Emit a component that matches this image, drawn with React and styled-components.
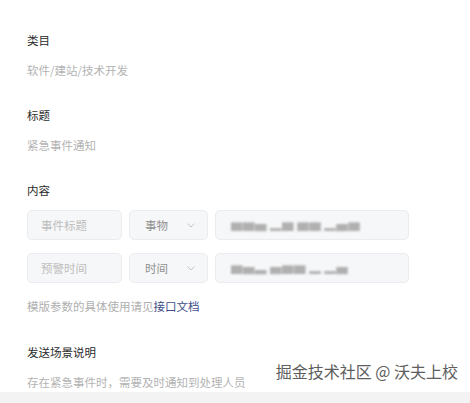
import React from 'react';
import styled, { createGlobalStyle } from 'styled-components';

const GlobalStyle = createGlobalStyle`
  html, body {
    margin: 0;
    padding: 0;
    background: #ffffff;
  }
  body {
    font-family: "Noto Sans CJK SC", "Noto Sans", sans-serif;
  }
`;

const Page = styled.div`
  position: relative;
  width: 470px;
  height: 403px;
  overflow: hidden;
  display: flex;
  flex-direction: column;
`;

const Form = styled.div`
  flex: 1;
  padding: 32px 27px 0;
`;

const Field = styled.div`
  margin-bottom: ${({ last }) => (last ? '0' : '29px')};
`;

const Label = styled.div`
  font-size: 11.5px;
  line-height: 16px;
  color: #2b2b2b;
  margin-bottom: ${({ tight }) => (tight ? '12px' : '14px')};
`;

const Value = styled.div`
  font-size: 11.5px;
  line-height: 16px;
  color: #b3b3b3;
`;

const Rows = styled.div`
  display: flex;
  flex-direction: column;
  gap: 13px;
`;

const Row = styled.div`
  display: grid;
  grid-template-columns: 95px 79px 194px;
  gap: 7px;
`;

const Box = styled.div`
  box-sizing: border-box;
  height: 30px;
  display: flex;
  align-items: center;
  justify-content: space-between;
  padding: 0 12px 0 ${({ pad }) => pad || 13}px;
  background: #f6f7f8;
  border: 1px solid #eaecef;
  border-radius: 5px;
  font-size: 11.5px;
  color: ${({ dim }) => (dim ? '#bdbdbd' : '#909090')};
`;

const Masked = styled.span`
  color: #b0b0b0;
  filter: blur(1.1px);
  letter-spacing: 0.5px;
`;

const Help = styled.div`
  margin-top: 15px;
  font-size: 11.5px;
  line-height: 16px;
  color: #b0b0b0;

  a {
    color: #414d88;
    text-decoration: none;
  }
`;

const Footer = styled.div`
  height: 11px;
  background: #f3f3f4;
`;

const Watermark = styled.div`
  position: absolute;
  right: 12px;
  bottom: 21px;
  font-size: 16px;
  line-height: 22px;
  color: #5e5e5e;
  text-shadow: 0 0 2px #ffffff;
`;

const Chevron = () => (
  <svg width="8" height="5" viewBox="0 0 8 5" fill="none">
    <path d="M0.6 0.6 L4 4 L7.4 0.6" stroke="#c4c4c4" strokeWidth="1" />
  </svg>
);

const App = () => {
  return (
    <Page>
      <GlobalStyle />
      <Form>
        <Field>
          <Label>类目</Label>
          <Value>软件/建站/技术开发</Value>
        </Field>
        <Field>
          <Label>标题</Label>
          <Value>紧急事件通知</Value>
        </Field>
        <Field>
          <Label tight>内容</Label>
          <Rows>
            <Row>
              <Box dim>事件标题</Box>
              <Box pad={15}>事物<Chevron /></Box>
              <Box pad={15}><Masked>▆▆▅ ▂▆ ▆▆ ▂▅▆</Masked></Box>
            </Row>
            <Row>
              <Box dim>预警时间</Box>
              <Box pad={15}>时间<Chevron /></Box>
              <Box pad={15}><Masked>▆▅▃ ▅▆▆ ▂  ▂▅</Masked></Box>
            </Row>
          </Rows>
          <Help>模版参数的具体使用请见<a href="#">接口文档</a></Help>
        </Field>
        <Field last style={{ marginTop: 30 }}>
          <Label>发送场景说明</Label>
          <Value>存在紧急事件时，需要及时通知到处理人员</Value>
        </Field>
      </Form>
      <Footer />
      <Watermark>掘金技术社区 @ 沃夫上校</Watermark>
    </Page>
  );
};

export default App;
